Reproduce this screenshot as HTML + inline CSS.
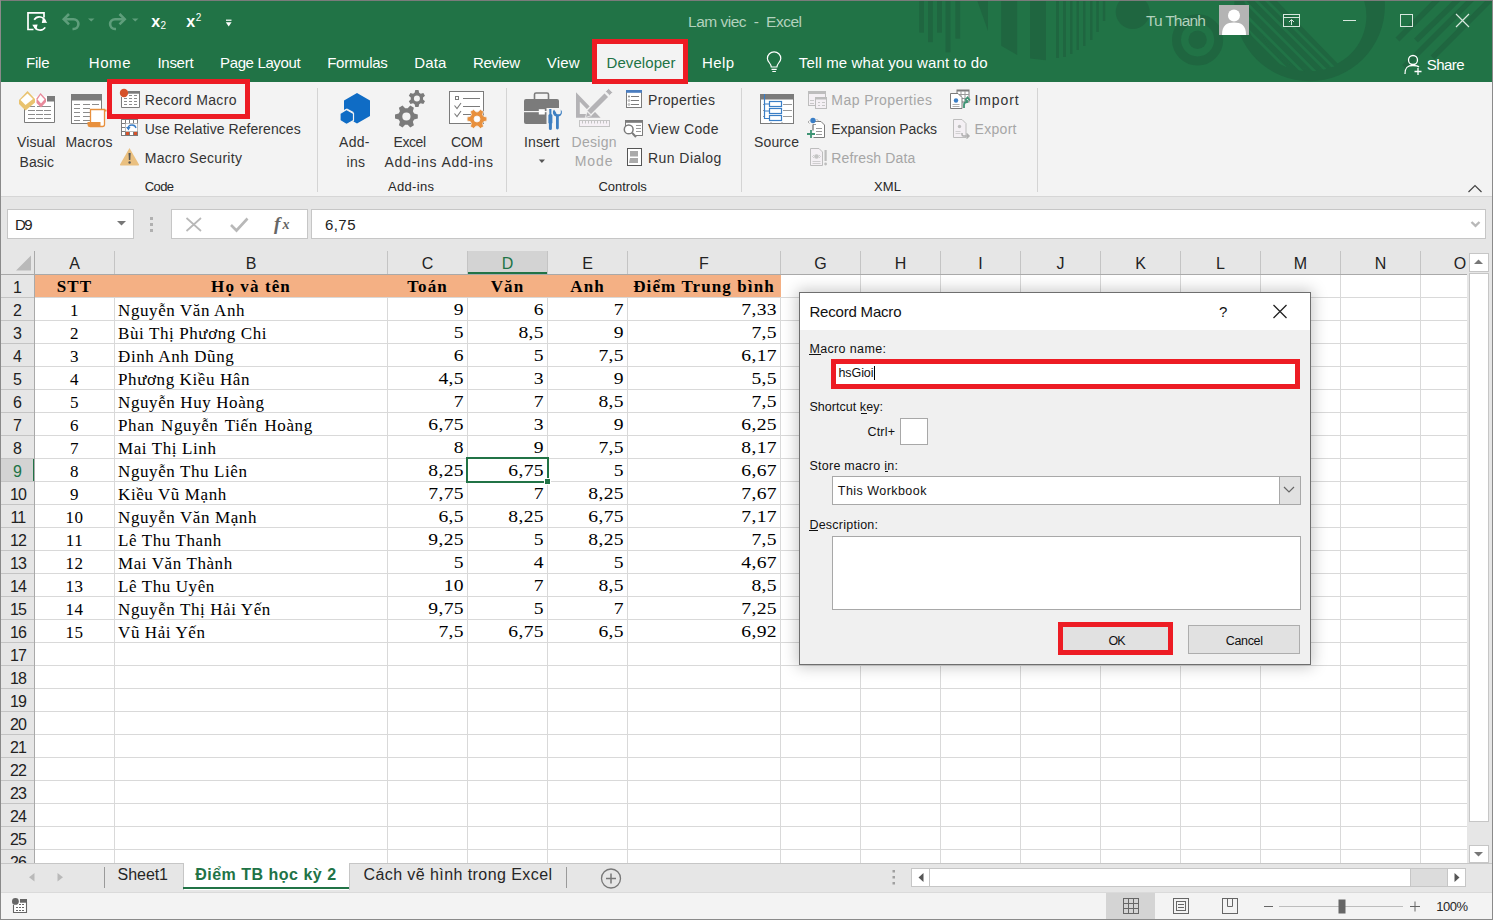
<!DOCTYPE html>
<html><head><meta charset="utf-8"><title>Excel - Record Macro</title>
<style>
html,body{margin:0;padding:0}
body{width:1493px;height:920px;overflow:hidden;position:relative;background:#fff;font-family:"Liberation Sans",sans-serif}
.a{position:absolute;box-sizing:content-box}
.t{position:absolute;white-space:pre;line-height:1}
</style></head><body>
<div class="a" style="left:0;top:0;width:1493px;height:82px;background:#217346"></div>
<svg class="a" style="left:0;top:0" width="1493" height="82" viewBox="0 0 1493 82">
<defs><clipPath id="ringin"><circle cx="1313" cy="16" r="53.4"/></clipPath><clipPath id="ringout"><circle cx="1309.6" cy="6" r="65.3"/></clipPath></defs>
<g fill="#1f6640">
<path d="M1030 0 H1046 V60.3 L1030 58.5Z"/>
<rect x="919.2" y="0" width="4.8" height="32.6"/><rect x="928" y="0" width="4.8" height="42.2"/><rect x="937" y="0" width="5" height="32.6"/><rect x="945.5" y="0" width="5" height="52.4"/><rect x="955.4" y="0" width="4.8" height="38.6"/>
<path d="M977 0 H988 V31Z"/><path d="M1001.2 0 H1017.2 V54.9 L1001.2 45.8Z"/>
<rect x="1056" y="0" width="3" height="58"/><rect x="1063" y="0" width="3" height="57"/><rect x="1070" y="0" width="2.5" height="54"/>
<rect x="1076.5" y="0" width="2.5" height="50"/><rect x="1083" y="0" width="2.5" height="46"/><rect x="1090" y="0" width="2.5" height="40"/><rect x="1096.3" y="0" width="2.5" height="32"/><rect x="1102.8" y="0" width="2.5" height="21"/>
<circle cx="1132.7" cy="12" r="17"/>
<circle cx="1197.6" cy="39.8" r="9.2"/>
</g>
<g fill="none" stroke="#1f6640">
<circle cx="1197.6" cy="39.8" r="21.1" stroke-width="9"/>
</g>
<g fill="#1f6640"><path fill-rule="evenodd" d="M1234.3 6 A75.3 75.3 0 1 0 1384.9 6 A75.3 75.3 0 1 0 1234.3 6Z M1259.6 16 A53.4 53.4 0 1 0 1366.4 16 A53.4 53.4 0 1 0 1259.6 16Z"/>
<g clip-path="url(#ringin)"><path d="M1200 0 H1276 L1340 66 L1340 90 H1200Z"/></g></g>
<g fill="none" stroke="#217346" stroke-width="2.8" clip-path="url(#ringout)">
<path d="M1266 0 L1356 90 M1255.6 0 L1345.6 90 M1243.4 0 L1333.4 90 M1230.5 0 L1320.5 90 M1217.7 0 L1307.7 90"/>
</g>
<g fill="none" stroke="#1f6640">
<path d="M1397.5 39.5 L1439 -2 M1416 40.5 L1459.5 -2 M1404 67 L1474 -3 M1432.6 57.5 L1494 -4" stroke-width="5.5"/>
</g>
</svg>
<div class="a" style="left:0;top:0;width:1493px;height:1px;background:#7b7b7b"></div>
<svg class="a" style="left:0;top:0" width="250" height="40" viewBox="0 0 250 40">
<path d="M33.5 29.5 H28 V12.8 H44 V17.5" fill="none" stroke="#fff" stroke-width="1.7"/>
<g fill="none" stroke="#fff" stroke-width="1.7">
<path d="M45.3 22 A6 6 0 0 0 34.2 19.8"/><path d="M34.3 25.3 A6 6 0 0 0 45.2 27.4"/>
</g>
<path d="M43 17.3 L47.3 22.8 L41.8 23Z M36.2 30.3 L32.2 24.7 L37.6 24.4Z" fill="#fff"/>
<g fill="none" stroke="#5e9e7b" stroke-width="2.6">
<path d="M64 19.2 H73.5 A4.9 4.9 0 0 1 73.5 29 H72.5"/>
<path d="M124.5 19.2 H115 A4.9 4.9 0 0 0 115 29 H116"/>
<path d="M69 14 L63.8 19.2 L69 24.4 M119.5 14 L124.7 19.2 L119.5 24.4"/>
</g>
<path d="M88 18.5 H94.5 L91.25 21.5Z M132 18.5 H138.5 L135.25 21.5Z" fill="#5e9e7b"/>
<text x="151.3" y="26.7" font-family="Liberation Sans" font-weight="bold" font-size="16" fill="#fff">x</text>
<text x="160.5" y="29" font-family="Liberation Sans" font-size="10" fill="#fff">2</text>
<text x="186.3" y="26.7" font-family="Liberation Sans" font-weight="bold" font-size="16" fill="#fff">x</text>
<text x="195.8" y="20.5" font-family="Liberation Sans" font-size="10" fill="#fff">2</text>
<path d="M226 20.2 H231.5" stroke="#fff" stroke-width="1.2"/><path d="M225.8 22.3 H231.6 L228.7 26.6Z" fill="#fff"/>
</svg>
<svg class="a" style="left:1219px;top:5px" width="30" height="30" viewBox="0 0 30 30"><rect width="30" height="30" fill="#b4b4b4"/>
<circle cx="15" cy="10.5" r="6" fill="#fff"/><path d="M3 30 C3 20 8 17.5 15 17.5 C22 17.5 27 20 27 30Z" fill="#fff"/></svg>
<svg class="a" style="left:1270px;top:0" width="223" height="82" viewBox="1270 0 223 82">
<g fill="none" stroke="#d8e7de" stroke-width="1">
<rect x="1283.5" y="14.5" width="16" height="12"/><path d="M1283.5 17.5 H1299.5"/><path d="M1291.5 25 V20 M1289 22 L1291.5 19.5 L1294 22"/>
<path d="M1343 20.5 H1356"/>
<rect x="1400.5" y="14.5" width="12" height="12"/>
<path d="M1456 14 L1469 27 M1469 14 L1456 27" stroke-width="1.2"/>
<circle cx="1413" cy="60" r="4.5" stroke="#fff" stroke-width="1.3"/><path d="M1405 74 C1405 67 1408 65.5 1413 65.5 C1416 65.5 1418 66 1419 67" stroke="#fff" stroke-width="1.3"/>
<path d="M1418 68 V75 M1414.5 71.5 H1421.5" stroke="#fff" stroke-width="1.3"/>
</g></svg>
<svg class="a" style="left:760px;top:48px" width="30" height="28" viewBox="760 48 30 28"><g fill="none" stroke="#fff" stroke-width="1.2">
<path d="M771.3 67 C771.3 63.5 767.4 62 767.4 58.5 A6.7 6.7 0 0 1 780.8 58.5 C780.8 62 776.9 63.5 776.9 67 Z"/><path d="M771.5 69.3 H776.7 M772.3 71.5 H775.9"/></g></svg>
<div class="a" style="left:597px;top:44px;width:86px;height:38px;background:#f3f3f3"></div>
<div class="a" style="left:1px;top:82px;width:1491px;height:114px;background:#f3f3f3"></div>
<div class="a" style="left:0;top:196px;width:1493px;height:1px;background:#d6d6d6"></div>
<div class="a" style="left:317px;top:88px;width:1px;height:104px;background:#d4d4d4"></div>
<div class="a" style="left:506px;top:88px;width:1px;height:104px;background:#d4d4d4"></div>
<div class="a" style="left:741px;top:88px;width:1px;height:104px;background:#d4d4d4"></div>
<div class="a" style="left:1037px;top:88px;width:1px;height:104px;background:#d4d4d4"></div>
<svg class="a" style="left:1466px;top:180px" width="18" height="14"><path d="M2.5 12 L9 5.5 L15.5 12" fill="none" stroke="#444" stroke-width="1.2"/></svg>
<div class="a" style="left:107px;top:79px;width:133px;height:30px;border:5px solid #ed1c24"></div>
<div class="a" style="left:592px;top:39px;width:86px;height:35px;border:5px solid #ed1c24"></div>
<svg class="a" style="left:0;top:82px" width="1040" height="114" viewBox="0 82 1040 114">
<!-- Visual Basic -->
<rect x="24.5" y="96.5" width="30" height="26" fill="#fff"/><path d="M24.5 108 V122.5 H54.5 V96.5" fill="none" stroke="#7b7b7b"/>
<rect x="47" y="96" width="8" height="5.5" fill="#7b7b7b"/>
<g stroke="#8c8c8c" stroke-width="1">
<path d="M28 106.5h7M37 106.5h7M44 106.5h7M28 110.5h7M36 110.5h7M44 110.5h7M28 114.5h7M36 114.5h7M44 114.5h7M28 118.5h7M36 118.5h7M44 118.5h7"/></g>
<path d="M27.5 91 L35 99 L35 102.5 L25.5 110.5 L19 104 L19 100 Z" fill="#e9c36f"/>
<path d="M27.5 93.5 L33 99 L25.5 105 L20.5 100 Z" fill="#fff"/>
<path d="M40.5 93 L46 99 L46 102 L41 107.5 L36.5 103 L36.5 98.5 Z" fill="#e8899b"/>
<path d="M40.5 95 L44.5 99.5 L41 103.5 L37.5 99.5 Z" fill="#fff"/>
<!-- Macros -->
<rect x="71.5" y="94.5" width="30" height="29" fill="#fff" stroke="#7b7b7b"/>
<rect x="71" y="94" width="31" height="6.5" fill="#7b7b7b"/>
<g stroke="#8c8c8c"><path d="M74 104.5h6M83 104.5h7M92 104.5h7M74 108.5h6M83 108.5h7M74 112.5h6M83 112.5h7M74 116.5h6M83 116.5h7M74 120.5h6M83 120.5h7"/></g>
<path d="M90.5 109.5 h14 v15 a2 2 0 0 1 -2 2 h-12 z" fill="#fff" stroke="#e8903d" stroke-width="1.3"/>
<path d="M87.5 122 h13 v5 h-11 a2 2.5 0 0 1 -2 -2.5z" fill="#e8903d"/>
<path d="M104.5 109.5 h2 v2 h-2z" fill="#e8903d"/>
<!-- Record Macro -->
<rect x="121.5" y="91.5" width="18" height="16" fill="#fff"/><path d="M121.5 97 V107.5 H139.5 V91.5" fill="none" stroke="#7b7b7b"/>
<rect x="128" y="91" width="12" height="2.7" fill="#7b7b7b"/>
<g stroke="#8c8c8c"><path d="M129 95.5h3M134 95.5h3M124 98.5h3M129 98.5h3M134 98.5h3M124 101.5h3M129 101.5h3M134 101.5h3M124 104.5h3M129 104.5h3M134 104.5h3"/></g>
<circle cx="124" cy="93" r="4.2" fill="#d5522b"/>
<!-- Use Relative References -->
<rect x="121.5" y="119.5" width="16" height="16" fill="#fff" stroke="#7b7b7b"/>
<path d="M125.5 119.5v16M129.5 119.5v16M133.5 119.5v16M121.5 123.5h16M121.5 127.5h16M121.5 131.5h16" stroke="#7b7b7b" stroke-width="1"/>
<rect x="125.5" y="123.5" width="12" height="8" fill="#fff"/>
<rect x="126" y="132" width="3" height="3" fill="#d5522b"/><rect x="134" y="132" width="3" height="3" fill="#d5522b"/>
<path d="M128 129 C128 126 130 125 132 125 C134 125 135.5 126 136 128" fill="none" stroke="#3a7ec6" stroke-width="1.3"/>
<path d="M126 127 L128.5 130.5 L130.5 127Z" fill="#3a7ec6"/>
<!-- Macro Security -->
<path d="M129.5 148 L139 164.5 Q139.5 165.5 138 165.5 L121 165.5 Q119.5 165.5 120 164.5 Z" fill="#eac080"/>
<path d="M128.5 153 h2.2 l-0.4 7 h-1.4z" fill="#555"/><circle cx="129.6" cy="162.5" r="1.2" fill="#555"/>
<!-- Add-ins -->
<path d="M357 93 L370 100.5 L370 116 L357 123.5 L353.5 121.5 L353.5 112 L347 108.5 L344 110 L344 100.5 Z" fill="#0f6cc5"/>
<path d="M346.5 109.5 L353.5 113.5 L353.5 120.5 L346.5 124.5 L340 120.5 L340 113.5 Z" fill="#0f6cc5" stroke="#f3f3f3" stroke-width="1.2"/>
<!-- Excel Add-ins gears -->
<path d="M414.14 113.50 L417.80 114.40 L417.80 118.60 L414.14 119.50 L412.87 121.70 L413.92 125.32 L410.28 127.42 L407.67 124.70 L405.13 124.70 L402.52 127.42 L398.88 125.32 L399.93 121.70 L398.66 119.50 L395.00 118.60 L395.00 114.40 L398.66 113.50 L399.93 111.30 L398.88 107.68 L402.52 105.58 L405.13 108.30 L407.67 108.30 L410.28 105.58 L413.92 107.68 L412.87 111.30Z M410.50 116.50 A4.1 4.1 0 1 0 402.30 116.50 A4.1 4.1 0 1 0 410.50 116.50Z" fill="#7b7b7b" fill-rule="evenodd" />
<path d="M414.60 92.74 L415.30 90.10 L418.50 90.10 L419.20 92.74 L420.74 93.63 L423.37 92.91 L424.97 95.69 L423.04 97.61 L423.04 99.39 L424.97 101.31 L423.37 104.09 L420.74 103.37 L419.20 104.26 L418.50 106.90 L415.30 106.90 L414.60 104.26 L413.06 103.37 L410.43 104.09 L408.83 101.31 L410.76 99.39 L410.76 97.61 L408.83 95.69 L410.43 92.91 L413.06 93.63Z M419.90 98.50 A3.0 3.0 0 1 0 413.90 98.50 A3.0 3.0 0 1 0 419.90 98.50Z" fill="#7b7b7b" fill-rule="evenodd" />
<!-- COM Add-ins -->
<rect x="449.5" y="91.5" width="34" height="32" fill="#fff" stroke="#7b7b7b"/>
<rect x="455.5" y="96.5" width="3" height="3" fill="none" stroke="#7b7b7b"/>
<path d="M463 98.5h17M463 106.5h17M463 114.5h8" stroke="#7b7b7b" stroke-width="1"/>
<path d="M454.5 105.5 l2.5 3 l4 -5.5 M454.5 113.5 l2.5 3 l4 -5.5" fill="none" stroke="#7b7b7b" stroke-width="1.1"/>
<path d="M483.67 116.30 L486.90 117.10 L486.90 120.90 L483.67 121.70 L482.68 123.43 L483.60 126.62 L480.30 128.52 L478.00 126.13 L476.00 126.13 L473.70 128.52 L470.40 126.62 L471.32 123.43 L470.33 121.70 L467.10 120.90 L467.10 117.10 L470.33 116.30 L471.32 114.57 L470.40 111.38 L473.70 109.48 L476.00 111.87 L478.00 111.87 L480.30 109.48 L483.60 111.38 L482.68 114.57Z M480.00 119.00 A3.0 3.0 0 1 0 474.00 119.00 A3.0 3.0 0 1 0 480.00 119.00Z" fill="#e8903d" fill-rule="evenodd" stroke="#f3f3f3" stroke-width="0.8"/>
<!-- Insert briefcase -->
<path d="M534.5 99 V94.5 a1.5 1.5 0 0 1 1.5 -1.5 h11 a1.5 1.5 0 0 1 1.5 1.5 V99" fill="none" stroke="#7b7b7b" stroke-width="1.6"/>
<rect x="524" y="99" width="35" height="25" rx="2" fill="#7b7b7b"/>
<rect x="524" y="111" width="35" height="1.2" fill="#f3f3f3"/>
<rect x="538.8" y="109.2" width="6" height="5.3" fill="#fff"/>
<rect x="546.5" y="108" width="16" height="22" fill="#f3f3f3"/>
<path d="M549.2 109 h2.2 v5 l1 1 v8 l-0.5 0.5 v5 a1.5 1.5 0 0 1 -3 0 v-5 l-0.5 -0.5 v-8 l1 -1z" fill="#3e7fc1"/>
<path d="M554 109.5 a4.2 4.2 0 0 0 2 7 v11.5 a1.4 1.4 0 0 0 2.8 0 v-11.5 a4.2 4.2 0 0 0 2 -7 v3 a1.7 1.7 0 0 1 -1.5 1.7 h-1.8 a1.7 1.7 0 0 1 -1.5 -1.7z" fill="#3e7fc1"/>
<path d="M538.8 159.4 h6.2 l-3.1 3.5z" fill="#555"/>
<!-- Design Mode -->
<path d="M576 92.2 L600.6 117.8 H576 Z M579.8 101.8 V114 H591.5 Z" fill="#b4b3b6" fill-rule="evenodd"/>
<path d="M586.5 110.5 L604.5 92.5 L609 97 L591 115 Z" fill="#b4b3b6" stroke="#f3f3f3" stroke-width="1.3"/>
<path d="M585.3 117.6 L587.2 111.6 L591.3 115.7 Z" fill="#b4b3b6" stroke="#f3f3f3" stroke-width="0.8"/>
<path d="M605.6 91.4 L608.6 88.4 L612.6 92.4 L609.6 95.4 Z" fill="#b4b3b6" stroke="#f3f3f3" stroke-width="0.8"/>
<rect x="579.5" y="120.5" width="30" height="6" fill="#f5f0f5" stroke="#c4c4c4"/>
<path d="M582.5 121v2.5M585.5 121v2.5M588.5 121v2.5M591.5 121v2.5M594.5 121v2.5M597.5 121v2.5M600.5 121v2.5M603.5 121v2.5M606.5 121v2.5" stroke="#c4c4c4"/>
<!-- Properties -->
<rect x="626.5" y="90.5" width="15" height="17" fill="#fff" stroke="#7b7b7b"/>
<rect x="626" y="90" width="16" height="2.8" fill="#4a7dc0"/>
<path d="M631 96.5h8M631 100.5h8M631 104.5h8" stroke="#7b7b7b"/>
<circle cx="629" cy="96.5" r="0.9" fill="#7b7b7b"/><circle cx="629" cy="100.5" r="0.9" fill="none" stroke="#7b7b7b" stroke-width="0.6"/><circle cx="629" cy="104.5" r="0.9" fill="none" stroke="#7b7b7b" stroke-width="0.6"/>
<!-- View Code -->
<path d="M625.5 126 V120.5 H642.5 V135.5 H636" fill="#fff" stroke="#7b7b7b"/>
<rect x="626" y="121" width="16" height="14" fill="#fff"/>
<path d="M625.5 126 V120.5 H642.5 V135.5 H636" fill="none" stroke="#7b7b7b"/>
<rect x="625" y="120" width="18" height="2.8" fill="#7b7b7b"/>
<path d="M636 125.5h5M636 128.5h5M636 131.5h5" stroke="#999"/>
<circle cx="628.7" cy="129.4" r="4.4" fill="#fff" stroke="#7b7b7b" stroke-width="1.5"/>
<path d="M632 132.8 L636 137" stroke="#7b7b7b" stroke-width="2"/>
<!-- Run Dialog -->
<rect x="627.5" y="148.5" width="14" height="17" fill="#fff" stroke="#555"/>
<rect x="630" y="151" width="8" height="5.5" fill="#aaa"/>
<path d="M630 158 h8 v5 h-9z" fill="#aaa"/>
<!-- Source -->
<rect x="760.5" y="94.5" width="33" height="29" fill="#fff" stroke="#7b7b7b"/>
<rect x="760" y="94" width="34" height="5.5" fill="#7b7b7b"/>
<path d="M763 104.5h2M763 110.5h2M763 116.5h2M783 104.5h9M783 110.5h9M783 116.5h9M771 122v1.5M782 122v1.5" stroke="#999"/>
<path d="M764.5 94 V118.5 H769 M764.5 104 H769 M764.5 111 H769" fill="none" stroke="#3a7ec6" stroke-width="1.2"/>
<rect x="769.5" y="101.5" width="12" height="5" fill="#fff" stroke="#3a7ec6" stroke-width="1.2"/>
<rect x="769.5" y="108.5" width="12" height="5" fill="#fff" stroke="#3a7ec6" stroke-width="1.2"/>
<rect x="769.5" y="115.5" width="12" height="5" fill="#fff" stroke="#3a7ec6" stroke-width="1.2"/>
<!-- Map Properties -->
<rect x="808.5" y="91.5" width="17" height="14" fill="#f4f0f4" stroke="#bdbdbd"/><rect x="808" y="91" width="18" height="3" fill="#bdbdbd"/>
<rect x="815.5" y="97.5" width="11" height="11" fill="#f4f0f4" stroke="#bdbdbd"/><rect x="815" y="97" width="12" height="2.5" fill="#bdbdbd"/>
<path d="M818 102.5h2M822 102.5h3M818 105.5h2M822 105.5h3M810 100.5h4M810 103.5h4" stroke="#c8c8c8"/>
<!-- Expansion Packs -->
<path d="M813.5 121.5 H821 L824.5 125 V137.5 H813.5" fill="#fff" stroke="#7b7b7b"/>
<path d="M816 128.5h6M816 131.5h6M816 134.5h6M813 124.5h3" stroke="#999"/>
<circle cx="813" cy="120.5" r="2.7" fill="#3a7ec6"/>
<path d="M809.5 120.5 l-1.5 1.5 l1.5 1.5 M816.5 119 l1.5 1.5 l-1.5 1.5" fill="none" stroke="#999" stroke-width="0.8"/>
<path d="M813 124.5v6" stroke="#555"/>
<path d="M807 134 h8 M811 130 v8" stroke="#3e9474" stroke-width="1.8"/>
<!-- Refresh Data -->
<path d="M810.5 148.5 H819 L822.5 152 V165.5 H810.5Z" fill="#f4f0f4" stroke="#bdbdbd"/>
<circle cx="816.5" cy="156.5" r="2.3" fill="#c4c4c4"/>
<path d="M812.5 156.5 l1.5 -1.5 M812.5 156.5 l1.5 1.5 M820.5 156.5 l-1.5 -1.5 M820.5 156.5 l-1.5 1.5 M812.5 161.5h8M812.5 163.5h8" stroke="#c4c4c4" stroke-width="0.8"/>
<rect x="824.5" y="150" width="2.2" height="11" fill="#bdbdbd"/><circle cx="825.6" cy="164" r="1.4" fill="#bdbdbd"/>
<!-- Import -->
<rect x="957" y="90" width="12" height="12" fill="#fff" stroke="#7b7b7b"/><rect x="957" y="90" width="12" height="1.5" fill="#7b7b7b"/>
<path d="M961 91v11M965 91v11M957 94.5h12M957 98.5h12" stroke="#999"/>
<path d="M950.5 93.5 H958 L962 97.5 V108.5 H950.5Z" fill="#fff" stroke="#7b7b7b"/>
<circle cx="956" cy="100.5" r="2.2" fill="#3a7ec6"/>
<path d="M952.5 104.5h7M952.5 106.5h7" stroke="#999" stroke-width="0.8"/>
<path d="M964 108 v-3 a3 3 0 0 1 3 -3 v-2 M965 100.5 l2.5 -3 l2.5 3" fill="none" stroke="#3e9474" stroke-width="1.8"/>
<!-- Export -->
<path d="M953.5 119.5 H962 L966 123.5 V137.5 H953.5Z" fill="#f4f0f4" stroke="#bdbdbd"/>
<circle cx="959.5" cy="126.5" r="1.7" fill="#bdbdbd"/>
<path d="M955.5 131.5h5M955.5 133.5h5" stroke="#c8c8c8" stroke-width="0.8"/>
<path d="M962 133 v1.5 a1.5 1.5 0 0 0 1.5 1.5 H969 M966.5 133.5 L969 136 L966.5 138.5" fill="none" stroke="#b0b0b0" stroke-width="1.5"/>
</svg>
<div class="a" style="left:1px;top:197px;width:1491px;height:54px;background:#e6e6e6"></div>
<div class="a" style="left:7px;top:209px;width:125px;height:28px;background:#fff;border:1px solid #c6c6c6"></div>
<svg class="a" style="left:115px;top:218px" width="14" height="10"><path d="M2 3 H11 L6.5 7.5Z" fill="#777"/></svg>
<svg class="a" style="left:148px;top:214px" width="8" height="20"><rect x="2" y="3" width="3" height="3" fill="#b0b0b0"/><rect x="2" y="9" width="3" height="3" fill="#b0b0b0"/><rect x="2" y="15" width="3" height="3" fill="#b0b0b0"/></svg>
<div class="a" style="left:171px;top:209px;width:135px;height:28px;background:#fff;border:1px solid #c6c6c6"></div>
<svg class="a" style="left:180px;top:210px" width="120" height="26" viewBox="180 210 120 26"><path d="M186.5 218 L201 231 M201 218 L186.5 231" stroke="#b8b8b8" stroke-width="1.7"/>
<path d="M231 225 L236.5 230.5 L247.5 218.5" fill="none" stroke="#b8b8b8" stroke-width="2.6"/>
<text x="274" y="230" font-family="Liberation Serif" font-style="italic" font-weight="bold" font-size="19" fill="#666">f</text><text x="282.5" y="229" font-family="Liberation Serif" font-style="italic" font-weight="bold" font-size="14" fill="#666">x</text></svg>
<div class="a" style="left:311px;top:209px;width:1173px;height:28px;background:#fff;border:1px solid #c6c6c6"></div>
<svg class="a" style="left:1466px;top:216px" width="16" height="14"><path d="M5.5 6 L9.5 9.8 L13.5 6" fill="none" stroke="#b8b8b8" stroke-width="2.4"/></svg>
<div class="a" style="left:1px;top:251px;width:1466px;height:23px;background:#e6e6e6"></div>
<div class="a" style="left:1px;top:274px;width:34px;height:589px;background:#e6e6e6"></div>
<div class="a" style="left:35px;top:275px;width:1432px;height:588px;background:#fff"></div>
<div class="a" style="left:468px;top:251px;width:79px;height:23px;background:#d3d3d3"></div>
<div class="a" style="left:468px;top:272px;width:79px;height:2px;background:#217346"></div>
<div class="a" style="left:1px;top:459px;width:33px;height:22px;background:#d3d3d3"></div>
<div class="a" style="left:33px;top:458px;width:2px;height:24px;background:#217346"></div>
<svg class="a" style="left:14px;top:254px" width="20" height="18"><path d="M17 1.5 V16.5 H2Z" fill="#b9b9b9"/></svg>
<div class="a" style="left:114px;top:275px;width:1px;height:588px;background:#d9d9d9"></div>
<div class="a" style="left:114px;top:251px;width:1px;height:23px;background:#c4c4c4"></div>
<div class="a" style="left:387px;top:275px;width:1px;height:588px;background:#d9d9d9"></div>
<div class="a" style="left:387px;top:251px;width:1px;height:23px;background:#c4c4c4"></div>
<div class="a" style="left:467px;top:275px;width:1px;height:588px;background:#d9d9d9"></div>
<div class="a" style="left:467px;top:251px;width:1px;height:23px;background:#c4c4c4"></div>
<div class="a" style="left:547px;top:275px;width:1px;height:588px;background:#d9d9d9"></div>
<div class="a" style="left:547px;top:251px;width:1px;height:23px;background:#c4c4c4"></div>
<div class="a" style="left:627px;top:275px;width:1px;height:588px;background:#d9d9d9"></div>
<div class="a" style="left:627px;top:251px;width:1px;height:23px;background:#c4c4c4"></div>
<div class="a" style="left:780px;top:275px;width:1px;height:588px;background:#d9d9d9"></div>
<div class="a" style="left:780px;top:251px;width:1px;height:23px;background:#c4c4c4"></div>
<div class="a" style="left:860px;top:275px;width:1px;height:588px;background:#d9d9d9"></div>
<div class="a" style="left:860px;top:251px;width:1px;height:23px;background:#c4c4c4"></div>
<div class="a" style="left:940px;top:275px;width:1px;height:588px;background:#d9d9d9"></div>
<div class="a" style="left:940px;top:251px;width:1px;height:23px;background:#c4c4c4"></div>
<div class="a" style="left:1020px;top:275px;width:1px;height:588px;background:#d9d9d9"></div>
<div class="a" style="left:1020px;top:251px;width:1px;height:23px;background:#c4c4c4"></div>
<div class="a" style="left:1100px;top:275px;width:1px;height:588px;background:#d9d9d9"></div>
<div class="a" style="left:1100px;top:251px;width:1px;height:23px;background:#c4c4c4"></div>
<div class="a" style="left:1180px;top:275px;width:1px;height:588px;background:#d9d9d9"></div>
<div class="a" style="left:1180px;top:251px;width:1px;height:23px;background:#c4c4c4"></div>
<div class="a" style="left:1260px;top:275px;width:1px;height:588px;background:#d9d9d9"></div>
<div class="a" style="left:1260px;top:251px;width:1px;height:23px;background:#c4c4c4"></div>
<div class="a" style="left:1340px;top:275px;width:1px;height:588px;background:#d9d9d9"></div>
<div class="a" style="left:1340px;top:251px;width:1px;height:23px;background:#c4c4c4"></div>
<div class="a" style="left:1420px;top:275px;width:1px;height:588px;background:#d9d9d9"></div>
<div class="a" style="left:1420px;top:251px;width:1px;height:23px;background:#c4c4c4"></div>
<div class="a" style="left:35px;top:297px;width:1432px;height:1px;background:#d9d9d9"></div>
<div class="a" style="left:1px;top:297px;width:33px;height:1px;background:#c4c4c4"></div>
<div class="a" style="left:35px;top:320px;width:1432px;height:1px;background:#d9d9d9"></div>
<div class="a" style="left:1px;top:320px;width:33px;height:1px;background:#c4c4c4"></div>
<div class="a" style="left:35px;top:343px;width:1432px;height:1px;background:#d9d9d9"></div>
<div class="a" style="left:1px;top:343px;width:33px;height:1px;background:#c4c4c4"></div>
<div class="a" style="left:35px;top:366px;width:1432px;height:1px;background:#d9d9d9"></div>
<div class="a" style="left:1px;top:366px;width:33px;height:1px;background:#c4c4c4"></div>
<div class="a" style="left:35px;top:389px;width:1432px;height:1px;background:#d9d9d9"></div>
<div class="a" style="left:1px;top:389px;width:33px;height:1px;background:#c4c4c4"></div>
<div class="a" style="left:35px;top:412px;width:1432px;height:1px;background:#d9d9d9"></div>
<div class="a" style="left:1px;top:412px;width:33px;height:1px;background:#c4c4c4"></div>
<div class="a" style="left:35px;top:435px;width:1432px;height:1px;background:#d9d9d9"></div>
<div class="a" style="left:1px;top:435px;width:33px;height:1px;background:#c4c4c4"></div>
<div class="a" style="left:35px;top:458px;width:1432px;height:1px;background:#d9d9d9"></div>
<div class="a" style="left:1px;top:458px;width:33px;height:1px;background:#c4c4c4"></div>
<div class="a" style="left:35px;top:481px;width:1432px;height:1px;background:#d9d9d9"></div>
<div class="a" style="left:1px;top:481px;width:33px;height:1px;background:#c4c4c4"></div>
<div class="a" style="left:35px;top:504px;width:1432px;height:1px;background:#d9d9d9"></div>
<div class="a" style="left:1px;top:504px;width:33px;height:1px;background:#c4c4c4"></div>
<div class="a" style="left:35px;top:527px;width:1432px;height:1px;background:#d9d9d9"></div>
<div class="a" style="left:1px;top:527px;width:33px;height:1px;background:#c4c4c4"></div>
<div class="a" style="left:35px;top:550px;width:1432px;height:1px;background:#d9d9d9"></div>
<div class="a" style="left:1px;top:550px;width:33px;height:1px;background:#c4c4c4"></div>
<div class="a" style="left:35px;top:573px;width:1432px;height:1px;background:#d9d9d9"></div>
<div class="a" style="left:1px;top:573px;width:33px;height:1px;background:#c4c4c4"></div>
<div class="a" style="left:35px;top:596px;width:1432px;height:1px;background:#d9d9d9"></div>
<div class="a" style="left:1px;top:596px;width:33px;height:1px;background:#c4c4c4"></div>
<div class="a" style="left:35px;top:619px;width:1432px;height:1px;background:#d9d9d9"></div>
<div class="a" style="left:1px;top:619px;width:33px;height:1px;background:#c4c4c4"></div>
<div class="a" style="left:35px;top:642px;width:1432px;height:1px;background:#d9d9d9"></div>
<div class="a" style="left:1px;top:642px;width:33px;height:1px;background:#c4c4c4"></div>
<div class="a" style="left:35px;top:665px;width:1432px;height:1px;background:#d9d9d9"></div>
<div class="a" style="left:1px;top:665px;width:33px;height:1px;background:#c4c4c4"></div>
<div class="a" style="left:35px;top:688px;width:1432px;height:1px;background:#d9d9d9"></div>
<div class="a" style="left:1px;top:688px;width:33px;height:1px;background:#c4c4c4"></div>
<div class="a" style="left:35px;top:711px;width:1432px;height:1px;background:#d9d9d9"></div>
<div class="a" style="left:1px;top:711px;width:33px;height:1px;background:#c4c4c4"></div>
<div class="a" style="left:35px;top:734px;width:1432px;height:1px;background:#d9d9d9"></div>
<div class="a" style="left:1px;top:734px;width:33px;height:1px;background:#c4c4c4"></div>
<div class="a" style="left:35px;top:757px;width:1432px;height:1px;background:#d9d9d9"></div>
<div class="a" style="left:1px;top:757px;width:33px;height:1px;background:#c4c4c4"></div>
<div class="a" style="left:35px;top:780px;width:1432px;height:1px;background:#d9d9d9"></div>
<div class="a" style="left:1px;top:780px;width:33px;height:1px;background:#c4c4c4"></div>
<div class="a" style="left:35px;top:803px;width:1432px;height:1px;background:#d9d9d9"></div>
<div class="a" style="left:1px;top:803px;width:33px;height:1px;background:#c4c4c4"></div>
<div class="a" style="left:35px;top:826px;width:1432px;height:1px;background:#d9d9d9"></div>
<div class="a" style="left:1px;top:826px;width:33px;height:1px;background:#c4c4c4"></div>
<div class="a" style="left:35px;top:849px;width:1432px;height:1px;background:#d9d9d9"></div>
<div class="a" style="left:1px;top:849px;width:33px;height:1px;background:#c4c4c4"></div>
<div class="a" style="left:1px;top:274px;width:1466px;height:1px;background:#a9a9a9"></div>
<div class="a" style="left:34px;top:251px;width:1px;height:612px;background:#a9a9a9"></div>
<div class="a" style="left:35px;top:275px;width:746px;height:22px;background:#f4b084"></div>
<div class="t" style="left:54.5px;top:256px;width:40px;text-align:center;font-family:'Liberation Sans';font-size:16px;color:#222">A</div>
<div class="t" style="left:231.0px;top:256px;width:40px;text-align:center;font-family:'Liberation Sans';font-size:16px;color:#222">B</div>
<div class="t" style="left:407.5px;top:256px;width:40px;text-align:center;font-family:'Liberation Sans';font-size:16px;color:#222">C</div>
<div class="t" style="left:487.5px;top:256px;width:40px;text-align:center;font-family:'Liberation Sans';font-size:16px;color:#217346">D</div>
<div class="t" style="left:567.5px;top:256px;width:40px;text-align:center;font-family:'Liberation Sans';font-size:16px;color:#222">E</div>
<div class="t" style="left:684.0px;top:256px;width:40px;text-align:center;font-family:'Liberation Sans';font-size:16px;color:#222">F</div>
<div class="t" style="left:800.5px;top:256px;width:40px;text-align:center;font-family:'Liberation Sans';font-size:16px;color:#222">G</div>
<div class="t" style="left:880.5px;top:256px;width:40px;text-align:center;font-family:'Liberation Sans';font-size:16px;color:#222">H</div>
<div class="t" style="left:960.5px;top:256px;width:40px;text-align:center;font-family:'Liberation Sans';font-size:16px;color:#222">I</div>
<div class="t" style="left:1040.5px;top:256px;width:40px;text-align:center;font-family:'Liberation Sans';font-size:16px;color:#222">J</div>
<div class="t" style="left:1120.5px;top:256px;width:40px;text-align:center;font-family:'Liberation Sans';font-size:16px;color:#222">K</div>
<div class="t" style="left:1200.5px;top:256px;width:40px;text-align:center;font-family:'Liberation Sans';font-size:16px;color:#222">L</div>
<div class="t" style="left:1280.5px;top:256px;width:40px;text-align:center;font-family:'Liberation Sans';font-size:16px;color:#222">M</div>
<div class="t" style="left:1360.5px;top:256px;width:40px;text-align:center;font-family:'Liberation Sans';font-size:16px;color:#222">N</div>
<div class="t" style="left:1440px;top:256px;width:40px;text-align:center;font-family:'Liberation Sans';font-size:16px;color:#222">O</div>
<div class="t" style="left:1px;top:280px;width:33px;text-align:center;font-family:'Liberation Sans';font-size:16px;color:#222;letter-spacing:0px;text-indent:0px">1</div>
<div class="t" style="left:1px;top:303px;width:33px;text-align:center;font-family:'Liberation Sans';font-size:16px;color:#222;letter-spacing:0px;text-indent:0px">2</div>
<div class="t" style="left:1px;top:326px;width:33px;text-align:center;font-family:'Liberation Sans';font-size:16px;color:#222;letter-spacing:0px;text-indent:0px">3</div>
<div class="t" style="left:1px;top:349px;width:33px;text-align:center;font-family:'Liberation Sans';font-size:16px;color:#222;letter-spacing:0px;text-indent:0px">4</div>
<div class="t" style="left:1px;top:372px;width:33px;text-align:center;font-family:'Liberation Sans';font-size:16px;color:#222;letter-spacing:0px;text-indent:0px">5</div>
<div class="t" style="left:1px;top:395px;width:33px;text-align:center;font-family:'Liberation Sans';font-size:16px;color:#222;letter-spacing:0px;text-indent:0px">6</div>
<div class="t" style="left:1px;top:418px;width:33px;text-align:center;font-family:'Liberation Sans';font-size:16px;color:#222;letter-spacing:0px;text-indent:0px">7</div>
<div class="t" style="left:1px;top:441px;width:33px;text-align:center;font-family:'Liberation Sans';font-size:16px;color:#222;letter-spacing:0px;text-indent:0px">8</div>
<div class="t" style="left:1px;top:464px;width:33px;text-align:center;font-family:'Liberation Sans';font-size:16px;color:#217346;letter-spacing:0px;text-indent:0px">9</div>
<div class="t" style="left:1px;top:487px;width:33px;text-align:center;font-family:'Liberation Sans';font-size:16px;color:#222;letter-spacing:-0.9px;text-indent:0.9px">10</div>
<div class="t" style="left:1px;top:510px;width:33px;text-align:center;font-family:'Liberation Sans';font-size:16px;color:#222;letter-spacing:-0.9px;text-indent:0.9px">11</div>
<div class="t" style="left:1px;top:533px;width:33px;text-align:center;font-family:'Liberation Sans';font-size:16px;color:#222;letter-spacing:-0.9px;text-indent:0.9px">12</div>
<div class="t" style="left:1px;top:556px;width:33px;text-align:center;font-family:'Liberation Sans';font-size:16px;color:#222;letter-spacing:-0.9px;text-indent:0.9px">13</div>
<div class="t" style="left:1px;top:579px;width:33px;text-align:center;font-family:'Liberation Sans';font-size:16px;color:#222;letter-spacing:-0.9px;text-indent:0.9px">14</div>
<div class="t" style="left:1px;top:602px;width:33px;text-align:center;font-family:'Liberation Sans';font-size:16px;color:#222;letter-spacing:-0.9px;text-indent:0.9px">15</div>
<div class="t" style="left:1px;top:625px;width:33px;text-align:center;font-family:'Liberation Sans';font-size:16px;color:#222;letter-spacing:-0.9px;text-indent:0.9px">16</div>
<div class="t" style="left:1px;top:648px;width:33px;text-align:center;font-family:'Liberation Sans';font-size:16px;color:#222;letter-spacing:-0.9px;text-indent:0.9px">17</div>
<div class="t" style="left:1px;top:671px;width:33px;text-align:center;font-family:'Liberation Sans';font-size:16px;color:#222;letter-spacing:-0.9px;text-indent:0.9px">18</div>
<div class="t" style="left:1px;top:694px;width:33px;text-align:center;font-family:'Liberation Sans';font-size:16px;color:#222;letter-spacing:-0.9px;text-indent:0.9px">19</div>
<div class="t" style="left:1px;top:717px;width:33px;text-align:center;font-family:'Liberation Sans';font-size:16px;color:#222;letter-spacing:-0.9px;text-indent:0.9px">20</div>
<div class="t" style="left:1px;top:740px;width:33px;text-align:center;font-family:'Liberation Sans';font-size:16px;color:#222;letter-spacing:-0.9px;text-indent:0.9px">21</div>
<div class="t" style="left:1px;top:763px;width:33px;text-align:center;font-family:'Liberation Sans';font-size:16px;color:#222;letter-spacing:-0.9px;text-indent:0.9px">22</div>
<div class="t" style="left:1px;top:786px;width:33px;text-align:center;font-family:'Liberation Sans';font-size:16px;color:#222;letter-spacing:-0.9px;text-indent:0.9px">23</div>
<div class="t" style="left:1px;top:809px;width:33px;text-align:center;font-family:'Liberation Sans';font-size:16px;color:#222;letter-spacing:-0.9px;text-indent:0.9px">24</div>
<div class="t" style="left:1px;top:832px;width:33px;text-align:center;font-family:'Liberation Sans';font-size:16px;color:#222;letter-spacing:-0.9px;text-indent:0.9px">25</div>
<div class="t" style="left:1px;top:855px;width:33px;text-align:center;font-family:'Liberation Sans';font-size:16px;color:#222;letter-spacing:-0.9px;text-indent:0.9px">26</div>
<div class="t" style="left:35px;top:277.6px;width:79px;text-align:center;font-family:'Liberation Serif';font-size:17px;font-weight:700;letter-spacing:1.1px">STT</div>
<div class="t" style="left:115px;top:277.6px;width:272px;text-align:center;font-family:'Liberation Serif';font-size:17px;font-weight:700;letter-spacing:1.1px">Họ và tên</div>
<div class="t" style="left:388px;top:277.6px;width:79px;text-align:center;font-family:'Liberation Serif';font-size:17px;font-weight:700;letter-spacing:1.1px">Toán</div>
<div class="t" style="left:468px;top:277.6px;width:79px;text-align:center;font-family:'Liberation Serif';font-size:17px;font-weight:700;letter-spacing:1.1px">Văn</div>
<div class="t" style="left:548px;top:277.6px;width:79px;text-align:center;font-family:'Liberation Serif';font-size:17px;font-weight:700;letter-spacing:1.1px">Anh</div>
<div class="t" style="left:628px;top:277.6px;width:152px;text-align:center;font-family:'Liberation Serif';font-size:17px;font-weight:700;letter-spacing:1.1px">Điểm Trung bình</div>
<div class="t" style="left:35px;top:301.6px;width:79px;text-align:center;font-family:'Liberation Serif';font-size:17px;letter-spacing:0.6px">1</div>
<div class="t" style="left:118px;top:301.6px;width:269px;text-align:left;font-family:'Liberation Serif';font-size:17px;letter-spacing:0.6px">Nguyễn Văn Anh</div>
<div class="t" style="left:378px;top:301.3px;width:86px;text-align:right;font-family:'Liberation Serif';font-size:17.5px;letter-spacing:0.3px;transform:scaleX(1.12);transform-origin:right center">9</div>
<div class="t" style="left:458px;top:301.3px;width:86px;text-align:right;font-family:'Liberation Serif';font-size:17.5px;letter-spacing:0.3px;transform:scaleX(1.12);transform-origin:right center">6</div>
<div class="t" style="left:538px;top:301.3px;width:86px;text-align:right;font-family:'Liberation Serif';font-size:17.5px;letter-spacing:0.3px;transform:scaleX(1.12);transform-origin:right center">7</div>
<div class="t" style="left:618px;top:301.3px;width:159px;text-align:right;font-family:'Liberation Serif';font-size:17.5px;letter-spacing:0.3px;transform:scaleX(1.12);transform-origin:right center">7,33</div>
<div class="t" style="left:35px;top:324.6px;width:79px;text-align:center;font-family:'Liberation Serif';font-size:17px;letter-spacing:0.6px">2</div>
<div class="t" style="left:118px;top:324.6px;width:269px;text-align:left;font-family:'Liberation Serif';font-size:17px;letter-spacing:0.6px">Bùi Thị Phương Chi</div>
<div class="t" style="left:378px;top:324.3px;width:86px;text-align:right;font-family:'Liberation Serif';font-size:17.5px;letter-spacing:0.3px;transform:scaleX(1.12);transform-origin:right center">5</div>
<div class="t" style="left:458px;top:324.3px;width:86px;text-align:right;font-family:'Liberation Serif';font-size:17.5px;letter-spacing:0.3px;transform:scaleX(1.12);transform-origin:right center">8,5</div>
<div class="t" style="left:538px;top:324.3px;width:86px;text-align:right;font-family:'Liberation Serif';font-size:17.5px;letter-spacing:0.3px;transform:scaleX(1.12);transform-origin:right center">9</div>
<div class="t" style="left:618px;top:324.3px;width:159px;text-align:right;font-family:'Liberation Serif';font-size:17.5px;letter-spacing:0.3px;transform:scaleX(1.12);transform-origin:right center">7,5</div>
<div class="t" style="left:35px;top:347.6px;width:79px;text-align:center;font-family:'Liberation Serif';font-size:17px;letter-spacing:0.6px">3</div>
<div class="t" style="left:118px;top:347.6px;width:269px;text-align:left;font-family:'Liberation Serif';font-size:17px;letter-spacing:0.6px">Đinh Anh Dũng</div>
<div class="t" style="left:378px;top:347.3px;width:86px;text-align:right;font-family:'Liberation Serif';font-size:17.5px;letter-spacing:0.3px;transform:scaleX(1.12);transform-origin:right center">6</div>
<div class="t" style="left:458px;top:347.3px;width:86px;text-align:right;font-family:'Liberation Serif';font-size:17.5px;letter-spacing:0.3px;transform:scaleX(1.12);transform-origin:right center">5</div>
<div class="t" style="left:538px;top:347.3px;width:86px;text-align:right;font-family:'Liberation Serif';font-size:17.5px;letter-spacing:0.3px;transform:scaleX(1.12);transform-origin:right center">7,5</div>
<div class="t" style="left:618px;top:347.3px;width:159px;text-align:right;font-family:'Liberation Serif';font-size:17.5px;letter-spacing:0.3px;transform:scaleX(1.12);transform-origin:right center">6,17</div>
<div class="t" style="left:35px;top:370.6px;width:79px;text-align:center;font-family:'Liberation Serif';font-size:17px;letter-spacing:0.6px">4</div>
<div class="t" style="left:118px;top:370.6px;width:269px;text-align:left;font-family:'Liberation Serif';font-size:17px;letter-spacing:0.6px">Phương Kiều Hân</div>
<div class="t" style="left:378px;top:370.3px;width:86px;text-align:right;font-family:'Liberation Serif';font-size:17.5px;letter-spacing:0.3px;transform:scaleX(1.12);transform-origin:right center">4,5</div>
<div class="t" style="left:458px;top:370.3px;width:86px;text-align:right;font-family:'Liberation Serif';font-size:17.5px;letter-spacing:0.3px;transform:scaleX(1.12);transform-origin:right center">3</div>
<div class="t" style="left:538px;top:370.3px;width:86px;text-align:right;font-family:'Liberation Serif';font-size:17.5px;letter-spacing:0.3px;transform:scaleX(1.12);transform-origin:right center">9</div>
<div class="t" style="left:618px;top:370.3px;width:159px;text-align:right;font-family:'Liberation Serif';font-size:17.5px;letter-spacing:0.3px;transform:scaleX(1.12);transform-origin:right center">5,5</div>
<div class="t" style="left:35px;top:393.6px;width:79px;text-align:center;font-family:'Liberation Serif';font-size:17px;letter-spacing:0.6px">5</div>
<div class="t" style="left:118px;top:393.6px;width:269px;text-align:left;font-family:'Liberation Serif';font-size:17px;letter-spacing:0.6px">Nguyễn Huy Hoàng</div>
<div class="t" style="left:378px;top:393.3px;width:86px;text-align:right;font-family:'Liberation Serif';font-size:17.5px;letter-spacing:0.3px;transform:scaleX(1.12);transform-origin:right center">7</div>
<div class="t" style="left:458px;top:393.3px;width:86px;text-align:right;font-family:'Liberation Serif';font-size:17.5px;letter-spacing:0.3px;transform:scaleX(1.12);transform-origin:right center">7</div>
<div class="t" style="left:538px;top:393.3px;width:86px;text-align:right;font-family:'Liberation Serif';font-size:17.5px;letter-spacing:0.3px;transform:scaleX(1.12);transform-origin:right center">8,5</div>
<div class="t" style="left:618px;top:393.3px;width:159px;text-align:right;font-family:'Liberation Serif';font-size:17.5px;letter-spacing:0.3px;transform:scaleX(1.12);transform-origin:right center">7,5</div>
<div class="t" style="left:35px;top:416.6px;width:79px;text-align:center;font-family:'Liberation Serif';font-size:17px;letter-spacing:0.6px">6</div>
<div class="t" style="left:118px;top:416.6px;width:269px;text-align:left;font-family:'Liberation Serif';font-size:17px;letter-spacing:0.6px"><span style="word-spacing:1.8px">Phan Nguyễn Tiến Hoàng</span></div>
<div class="t" style="left:378px;top:416.3px;width:86px;text-align:right;font-family:'Liberation Serif';font-size:17.5px;letter-spacing:0.3px;transform:scaleX(1.12);transform-origin:right center">6,75</div>
<div class="t" style="left:458px;top:416.3px;width:86px;text-align:right;font-family:'Liberation Serif';font-size:17.5px;letter-spacing:0.3px;transform:scaleX(1.12);transform-origin:right center">3</div>
<div class="t" style="left:538px;top:416.3px;width:86px;text-align:right;font-family:'Liberation Serif';font-size:17.5px;letter-spacing:0.3px;transform:scaleX(1.12);transform-origin:right center">9</div>
<div class="t" style="left:618px;top:416.3px;width:159px;text-align:right;font-family:'Liberation Serif';font-size:17.5px;letter-spacing:0.3px;transform:scaleX(1.12);transform-origin:right center">6,25</div>
<div class="t" style="left:35px;top:439.6px;width:79px;text-align:center;font-family:'Liberation Serif';font-size:17px;letter-spacing:0.6px">7</div>
<div class="t" style="left:118px;top:439.6px;width:269px;text-align:left;font-family:'Liberation Serif';font-size:17px;letter-spacing:0.6px">Mai Thị Linh</div>
<div class="t" style="left:378px;top:439.3px;width:86px;text-align:right;font-family:'Liberation Serif';font-size:17.5px;letter-spacing:0.3px;transform:scaleX(1.12);transform-origin:right center">8</div>
<div class="t" style="left:458px;top:439.3px;width:86px;text-align:right;font-family:'Liberation Serif';font-size:17.5px;letter-spacing:0.3px;transform:scaleX(1.12);transform-origin:right center">9</div>
<div class="t" style="left:538px;top:439.3px;width:86px;text-align:right;font-family:'Liberation Serif';font-size:17.5px;letter-spacing:0.3px;transform:scaleX(1.12);transform-origin:right center">7,5</div>
<div class="t" style="left:618px;top:439.3px;width:159px;text-align:right;font-family:'Liberation Serif';font-size:17.5px;letter-spacing:0.3px;transform:scaleX(1.12);transform-origin:right center">8,17</div>
<div class="t" style="left:35px;top:462.6px;width:79px;text-align:center;font-family:'Liberation Serif';font-size:17px;letter-spacing:0.6px">8</div>
<div class="t" style="left:118px;top:462.6px;width:269px;text-align:left;font-family:'Liberation Serif';font-size:17px;letter-spacing:0.6px">Nguyễn Thu Liên</div>
<div class="t" style="left:378px;top:462.3px;width:86px;text-align:right;font-family:'Liberation Serif';font-size:17.5px;letter-spacing:0.3px;transform:scaleX(1.12);transform-origin:right center">8,25</div>
<div class="t" style="left:458px;top:462.3px;width:86px;text-align:right;font-family:'Liberation Serif';font-size:17.5px;letter-spacing:0.3px;transform:scaleX(1.12);transform-origin:right center">6,75</div>
<div class="t" style="left:538px;top:462.3px;width:86px;text-align:right;font-family:'Liberation Serif';font-size:17.5px;letter-spacing:0.3px;transform:scaleX(1.12);transform-origin:right center">5</div>
<div class="t" style="left:618px;top:462.3px;width:159px;text-align:right;font-family:'Liberation Serif';font-size:17.5px;letter-spacing:0.3px;transform:scaleX(1.12);transform-origin:right center">6,67</div>
<div class="t" style="left:35px;top:485.6px;width:79px;text-align:center;font-family:'Liberation Serif';font-size:17px;letter-spacing:0.6px">9</div>
<div class="t" style="left:118px;top:485.6px;width:269px;text-align:left;font-family:'Liberation Serif';font-size:17px;letter-spacing:0.6px">Kiều Vũ Mạnh</div>
<div class="t" style="left:378px;top:485.3px;width:86px;text-align:right;font-family:'Liberation Serif';font-size:17.5px;letter-spacing:0.3px;transform:scaleX(1.12);transform-origin:right center">7,75</div>
<div class="t" style="left:458px;top:485.3px;width:86px;text-align:right;font-family:'Liberation Serif';font-size:17.5px;letter-spacing:0.3px;transform:scaleX(1.12);transform-origin:right center">7</div>
<div class="t" style="left:538px;top:485.3px;width:86px;text-align:right;font-family:'Liberation Serif';font-size:17.5px;letter-spacing:0.3px;transform:scaleX(1.12);transform-origin:right center">8,25</div>
<div class="t" style="left:618px;top:485.3px;width:159px;text-align:right;font-family:'Liberation Serif';font-size:17.5px;letter-spacing:0.3px;transform:scaleX(1.12);transform-origin:right center">7,67</div>
<div class="t" style="left:35px;top:508.6px;width:79px;text-align:center;font-family:'Liberation Serif';font-size:17px;letter-spacing:0.6px">10</div>
<div class="t" style="left:118px;top:508.6px;width:269px;text-align:left;font-family:'Liberation Serif';font-size:17px;letter-spacing:0.6px">Nguyễn Văn Mạnh</div>
<div class="t" style="left:378px;top:508.3px;width:86px;text-align:right;font-family:'Liberation Serif';font-size:17.5px;letter-spacing:0.3px;transform:scaleX(1.12);transform-origin:right center">6,5</div>
<div class="t" style="left:458px;top:508.3px;width:86px;text-align:right;font-family:'Liberation Serif';font-size:17.5px;letter-spacing:0.3px;transform:scaleX(1.12);transform-origin:right center">8,25</div>
<div class="t" style="left:538px;top:508.3px;width:86px;text-align:right;font-family:'Liberation Serif';font-size:17.5px;letter-spacing:0.3px;transform:scaleX(1.12);transform-origin:right center">6,75</div>
<div class="t" style="left:618px;top:508.3px;width:159px;text-align:right;font-family:'Liberation Serif';font-size:17.5px;letter-spacing:0.3px;transform:scaleX(1.12);transform-origin:right center">7,17</div>
<div class="t" style="left:35px;top:531.6px;width:79px;text-align:center;font-family:'Liberation Serif';font-size:17px;letter-spacing:0.6px">11</div>
<div class="t" style="left:118px;top:531.6px;width:269px;text-align:left;font-family:'Liberation Serif';font-size:17px;letter-spacing:0.6px">Lê Thu Thanh</div>
<div class="t" style="left:378px;top:531.3px;width:86px;text-align:right;font-family:'Liberation Serif';font-size:17.5px;letter-spacing:0.3px;transform:scaleX(1.12);transform-origin:right center">9,25</div>
<div class="t" style="left:458px;top:531.3px;width:86px;text-align:right;font-family:'Liberation Serif';font-size:17.5px;letter-spacing:0.3px;transform:scaleX(1.12);transform-origin:right center">5</div>
<div class="t" style="left:538px;top:531.3px;width:86px;text-align:right;font-family:'Liberation Serif';font-size:17.5px;letter-spacing:0.3px;transform:scaleX(1.12);transform-origin:right center">8,25</div>
<div class="t" style="left:618px;top:531.3px;width:159px;text-align:right;font-family:'Liberation Serif';font-size:17.5px;letter-spacing:0.3px;transform:scaleX(1.12);transform-origin:right center">7,5</div>
<div class="t" style="left:35px;top:554.6px;width:79px;text-align:center;font-family:'Liberation Serif';font-size:17px;letter-spacing:0.6px">12</div>
<div class="t" style="left:118px;top:554.6px;width:269px;text-align:left;font-family:'Liberation Serif';font-size:17px;letter-spacing:0.6px">Mai Văn Thành</div>
<div class="t" style="left:378px;top:554.3px;width:86px;text-align:right;font-family:'Liberation Serif';font-size:17.5px;letter-spacing:0.3px;transform:scaleX(1.12);transform-origin:right center">5</div>
<div class="t" style="left:458px;top:554.3px;width:86px;text-align:right;font-family:'Liberation Serif';font-size:17.5px;letter-spacing:0.3px;transform:scaleX(1.12);transform-origin:right center">4</div>
<div class="t" style="left:538px;top:554.3px;width:86px;text-align:right;font-family:'Liberation Serif';font-size:17.5px;letter-spacing:0.3px;transform:scaleX(1.12);transform-origin:right center">5</div>
<div class="t" style="left:618px;top:554.3px;width:159px;text-align:right;font-family:'Liberation Serif';font-size:17.5px;letter-spacing:0.3px;transform:scaleX(1.12);transform-origin:right center">4,67</div>
<div class="t" style="left:35px;top:577.6px;width:79px;text-align:center;font-family:'Liberation Serif';font-size:17px;letter-spacing:0.6px">13</div>
<div class="t" style="left:118px;top:577.6px;width:269px;text-align:left;font-family:'Liberation Serif';font-size:17px;letter-spacing:0.6px">Lê Thu Uyên</div>
<div class="t" style="left:378px;top:577.3px;width:86px;text-align:right;font-family:'Liberation Serif';font-size:17.5px;letter-spacing:0.3px;transform:scaleX(1.12);transform-origin:right center">10</div>
<div class="t" style="left:458px;top:577.3px;width:86px;text-align:right;font-family:'Liberation Serif';font-size:17.5px;letter-spacing:0.3px;transform:scaleX(1.12);transform-origin:right center">7</div>
<div class="t" style="left:538px;top:577.3px;width:86px;text-align:right;font-family:'Liberation Serif';font-size:17.5px;letter-spacing:0.3px;transform:scaleX(1.12);transform-origin:right center">8,5</div>
<div class="t" style="left:618px;top:577.3px;width:159px;text-align:right;font-family:'Liberation Serif';font-size:17.5px;letter-spacing:0.3px;transform:scaleX(1.12);transform-origin:right center">8,5</div>
<div class="t" style="left:35px;top:600.6px;width:79px;text-align:center;font-family:'Liberation Serif';font-size:17px;letter-spacing:0.6px">14</div>
<div class="t" style="left:118px;top:600.6px;width:269px;text-align:left;font-family:'Liberation Serif';font-size:17px;letter-spacing:0.6px">Nguyễn Thị Hải Yến</div>
<div class="t" style="left:378px;top:600.3px;width:86px;text-align:right;font-family:'Liberation Serif';font-size:17.5px;letter-spacing:0.3px;transform:scaleX(1.12);transform-origin:right center">9,75</div>
<div class="t" style="left:458px;top:600.3px;width:86px;text-align:right;font-family:'Liberation Serif';font-size:17.5px;letter-spacing:0.3px;transform:scaleX(1.12);transform-origin:right center">5</div>
<div class="t" style="left:538px;top:600.3px;width:86px;text-align:right;font-family:'Liberation Serif';font-size:17.5px;letter-spacing:0.3px;transform:scaleX(1.12);transform-origin:right center">7</div>
<div class="t" style="left:618px;top:600.3px;width:159px;text-align:right;font-family:'Liberation Serif';font-size:17.5px;letter-spacing:0.3px;transform:scaleX(1.12);transform-origin:right center">7,25</div>
<div class="t" style="left:35px;top:623.6px;width:79px;text-align:center;font-family:'Liberation Serif';font-size:17px;letter-spacing:0.6px">15</div>
<div class="t" style="left:118px;top:623.6px;width:269px;text-align:left;font-family:'Liberation Serif';font-size:17px;letter-spacing:0.6px">Vũ Hải Yến</div>
<div class="t" style="left:378px;top:623.3px;width:86px;text-align:right;font-family:'Liberation Serif';font-size:17.5px;letter-spacing:0.3px;transform:scaleX(1.12);transform-origin:right center">7,5</div>
<div class="t" style="left:458px;top:623.3px;width:86px;text-align:right;font-family:'Liberation Serif';font-size:17.5px;letter-spacing:0.3px;transform:scaleX(1.12);transform-origin:right center">6,75</div>
<div class="t" style="left:538px;top:623.3px;width:86px;text-align:right;font-family:'Liberation Serif';font-size:17.5px;letter-spacing:0.3px;transform:scaleX(1.12);transform-origin:right center">6,5</div>
<div class="t" style="left:618px;top:623.3px;width:159px;text-align:right;font-family:'Liberation Serif';font-size:17.5px;letter-spacing:0.3px;transform:scaleX(1.12);transform-origin:right center">6,92</div>
<div class="a" style="left:466px;top:457px;width:79px;height:22px;border:2px solid #217346"></div>
<div class="a" style="left:544px;top:478px;width:5px;height:5px;background:#217346;border:1px solid #fff"></div>
<div class="a" style="left:1467px;top:251px;width:25px;height:612px;background:#e6e6e6"></div>
<div class="a" style="left:1469px;top:253px;width:18px;height:17px;background:#fff;border:1px solid #c6c6c6"></div>
<svg class="a" style="left:1472px;top:256px" width="14" height="12"><path d="M2 8 H11 L6.5 3.5Z" fill="#777"/></svg>
<div class="a" style="left:1469px;top:273px;width:18px;height:547px;background:#fff;border:1px solid #c6c6c6"></div>
<div class="a" style="left:1469px;top:845px;width:18px;height:16px;background:#fff;border:1px solid #c6c6c6"></div>
<svg class="a" style="left:1472px;top:848px" width="14" height="12"><path d="M2 4 H11 L6.5 8.5Z" fill="#777"/></svg>
<div class="a" style="left:1px;top:863px;width:1491px;height:29px;background:#e6e6e6;border-top:1px solid #c6c6c6"></div>
<svg class="a" style="left:20px;top:866px" width="60" height="22"><path d="M14.5 7 V15.5 L9 11.25Z" fill="#b9b9b9"/><path d="M37.5 7 V15.5 L43 11.25Z" fill="#b9b9b9"/></svg>
<div class="a" style="left:104px;top:867px;width:1px;height:21px;background:#9a9a9a"></div>
<div class="a" style="left:183px;top:863px;width:165px;height:27px;background:#fff;border-right:1px solid #c6c6c6;border-left:1px solid #c6c6c6"></div>
<div class="a" style="left:183px;top:887px;width:166px;height:2px;background:#217346"></div>
<div class="a" style="left:566px;top:867px;width:1px;height:21px;background:#9a9a9a"></div>
<svg class="a" style="left:598px;top:866px" width="26" height="26"><circle cx="13" cy="12.5" r="9.5" fill="none" stroke="#777" stroke-width="1.3"/><path d="M13 7.5 V17.5 M8 12.5 H18" stroke="#777" stroke-width="1.5"/></svg>
<svg class="a" style="left:890px;top:868px" width="8" height="20"><rect x="2.5" y="2" width="2.5" height="2.5" fill="#a0a0a0"/><rect x="2.5" y="8" width="2.5" height="2.5" fill="#a0a0a0"/><rect x="2.5" y="14" width="2.5" height="2.5" fill="#a0a0a0"/></svg>
<div class="a" style="left:911px;top:868px;width:555px;height:19px;background:#dcdcdc;border:1px solid #c6c6c6;box-sizing:border-box"></div>
<div class="a" style="left:911px;top:868px;width:19px;height:19px;background:#fff;border:1px solid #c6c6c6;box-sizing:border-box"></div>
<div class="a" style="left:929px;top:868px;width:482px;height:19px;background:#fff;border:1px solid #c6c6c6;box-sizing:border-box"></div>
<div class="a" style="left:1447px;top:868px;width:19px;height:19px;background:#fff;border:1px solid #c6c6c6;box-sizing:border-box"></div>
<svg class="a" style="left:911px;top:868px" width="556" height="19"><path d="M12.5 5 V14 L7.5 9.5Z" fill="#555"/><path d="M543.5 5 V14 L548.5 9.5Z" fill="#555"/></svg>
<div class="a" style="left:1px;top:892px;width:1491px;height:27px;background:#f3f3f3;border-top:1px solid #dadada;box-sizing:border-box"></div>
<div class="a" style="left:0;top:919px;width:1493px;height:1px;background:#8a8a8a"></div>
<div class="a" style="left:0;top:0;width:1px;height:920px;background:#8a8a8a"></div>
<div class="a" style="left:1492px;top:0;width:1px;height:920px;background:#8a8a8a"></div>
<svg class="a" style="left:10px;top:896px" width="20" height="20" viewBox="10 896 20 20"><rect x="13.5" y="902.5" width="13" height="10" fill="#fff"/><path d="M13.5 905 V912.5 H26.5 V902" fill="none" stroke="#666" stroke-width="1.1"/><rect x="20" y="899" width="7" height="3.7" fill="#666"/>
<path d="M19 904.5h2M22 904.5h2M16 907.5h2M19 907.5h2M22 907.5h2M16 910.5h2M19 910.5h2M22 910.5h2" stroke="#666"/><circle cx="15.4" cy="901.4" r="3.4" fill="#666"/></svg>
<div class="a" style="left:1106px;top:893px;width:49px;height:26px;background:#d4d4d4"></div>
<svg class="a" style="left:1100px;top:892px" width="393" height="28" viewBox="1100 892 393 28"><g fill="none" stroke="#666">
<rect x="1123.5" y="898.5" width="15" height="15"/><path d="M1128.5 898.5v15M1133.5 898.5v15M1123.5 903.5h15M1123.5 908.5h15"/>
<rect x="1173.5" y="898.5" width="15" height="15"/><rect x="1176.5" y="901.5" width="9" height="9"/><path d="M1178 904.5h6M1178 907.5h6"/>
<rect x="1222.5" y="898.5" width="15" height="15"/><path d="M1227.5 898.5v8h5v-8"/>
<path d="M1264 906.5h9M1410 906.5h10M1415 901.5v10"/>
</g><path d="M1279 906.5 H1403" stroke="#bdbdbd"/><rect x="1338.5" y="899.5" width="7" height="14" fill="#666"/></svg>
<div class="a" style="left:799px;top:292px;width:510px;height:371px;background:#f0f0f0;border:1px solid #6e6e6e;box-shadow:0 0 14px 2px rgba(0,0,0,0.22)"></div>
<div class="a" style="left:800px;top:293px;width:510px;height:37px;background:#fff"></div>
<svg class="a" style="left:1270px;top:302px" width="20" height="20"><path d="M3.5 3 L16.5 16 M16.5 3 L3.5 16" stroke="#222" stroke-width="1.3"/></svg>
<div class="a" style="left:809px;top:354px;width:12px;height:1px;background:#111"></div>
<div class="a" style="left:831px;top:359px;width:459px;height:20px;background:#fff;border:5px solid #ed1c24"></div>
<div class="a" style="left:874px;top:366px;width:1px;height:14px;background:#000"></div>
<div class="a" style="left:861px;top:413px;width:6px;height:1px;background:#111"></div>
<div class="a" style="left:900px;top:418px;width:26px;height:25px;background:#fff;border:1px solid #a8a8a8"></div>
<div class="a" style="left:884.5px;top:471px;width:3.5px;height:1px;background:#111"></div>
<div class="a" style="left:832px;top:476px;width:467px;height:27px;background:#fff;border:1px solid #a8a8a8"></div>
<div class="a" style="left:1279px;top:477px;width:20px;height:27px;background:#e1e1e1;border-left:1px solid #a8a8a8"></div>
<svg class="a" style="left:1281px;top:482px" width="16" height="14"><path d="M3 5 L8 10 L13 5" fill="none" stroke="#666" stroke-width="1.2"/></svg>
<div class="a" style="left:809px;top:530px;width:9px;height:1px;background:#111"></div>
<div class="a" style="left:832px;top:536px;width:467px;height:72px;background:#fff;border:1px solid #a8a8a8"></div>
<div class="a" style="left:1058px;top:622px;width:105px;height:23px;background:#e1e1e1;border:5px solid #ed1c24"></div>
<div class="a" style="left:1188px;top:625px;width:110px;height:27px;background:#e1e1e1;border:1px solid #adadad"></div>
<div class="t" style="left:688.0px;top:13.8px;font-family:'Liberation Sans';font-size:15.5px;color:#b3d1bd;letter-spacing:-0.49px;">Lam viec  -  Excel</div>
<div class="t" style="left:1146.0px;top:13.4px;font-family:'Liberation Sans';font-size:15.5px;color:#b3d1bd;letter-spacing:-0.79px;">Tu Thanh</div>
<div class="t" style="left:26.0px;top:54.8px;font-family:'Liberation Sans';font-size:15px;color:#ffffff;letter-spacing:-0.19px;">File</div>
<div class="t" style="left:88.7px;top:54.8px;font-family:'Liberation Sans';font-size:15px;color:#ffffff;letter-spacing:0.63px;">Home</div>
<div class="t" style="left:157.4px;top:54.8px;font-family:'Liberation Sans';font-size:15px;color:#ffffff;letter-spacing:-0.26px;">Insert</div>
<div class="t" style="left:220.0px;top:54.8px;font-family:'Liberation Sans';font-size:15px;color:#ffffff;letter-spacing:-0.36px;">Page Layout</div>
<div class="t" style="left:327.2px;top:54.8px;font-family:'Liberation Sans';font-size:15px;color:#ffffff;letter-spacing:-0.27px;">Formulas</div>
<div class="t" style="left:414.3px;top:54.8px;font-family:'Liberation Sans';font-size:15px;color:#ffffff;letter-spacing:0.14px;">Data</div>
<div class="t" style="left:473.0px;top:54.8px;font-family:'Liberation Sans';font-size:15px;color:#ffffff;letter-spacing:-0.44px;">Review</div>
<div class="t" style="left:546.8px;top:54.8px;font-family:'Liberation Sans';font-size:15px;color:#ffffff;letter-spacing:0.15px;">View</div>
<div class="t" style="left:702.0px;top:54.8px;font-family:'Liberation Sans';font-size:15px;color:#ffffff;letter-spacing:0.38px;">Help</div>
<div class="t" style="left:798.8px;top:55.0px;font-family:'Liberation Sans';font-size:15px;color:#ffffff;letter-spacing:0.14px;">Tell me what you want to do</div>
<div class="t" style="left:1426.8px;top:56.8px;font-family:'Liberation Sans';font-size:15px;color:#ffffff;letter-spacing:-0.58px;">Share</div>
<div class="t" style="left:606.5px;top:54.8px;font-family:'Liberation Sans';font-size:15px;color:#217346;letter-spacing:0.08px;">Developer</div>
<div class="t" style="left:17.0px;top:134.7px;font-family:'Liberation Sans';font-size:14px;color:#333333;letter-spacing:0.12px;">Visual</div>
<div class="t" style="left:19.5px;top:154.6px;font-family:'Liberation Sans';font-size:14px;color:#333333;letter-spacing:0.07px;">Basic</div>
<div class="t" style="left:65.4px;top:134.7px;font-family:'Liberation Sans';font-size:14px;color:#333333;letter-spacing:0.24px;">Macros</div>
<div class="t" style="left:144.7px;top:92.6px;font-family:'Liberation Sans';font-size:14px;color:#333333;letter-spacing:0.35px;">Record Macro</div>
<div class="t" style="left:144.7px;top:122.0px;font-family:'Liberation Sans';font-size:14px;color:#333333;letter-spacing:0.05px;">Use Relative References</div>
<div class="t" style="left:144.7px;top:151.0px;font-family:'Liberation Sans';font-size:14px;color:#333333;letter-spacing:0.30px;">Macro Security</div>
<div class="t" style="left:144.7px;top:179.6px;font-family:'Liberation Sans';font-size:13px;color:#262626;letter-spacing:-0.59px;">Code</div>
<div class="t" style="left:339.0px;top:134.7px;font-family:'Liberation Sans';font-size:14px;color:#333333;letter-spacing:0.31px;">Add-</div>
<div class="t" style="left:346.5px;top:154.6px;font-family:'Liberation Sans';font-size:14px;color:#333333;letter-spacing:0.30px;">ins</div>
<div class="t" style="left:393.5px;top:134.7px;font-family:'Liberation Sans';font-size:14px;color:#333333;letter-spacing:-0.43px;">Excel</div>
<div class="t" style="left:384.5px;top:154.6px;font-family:'Liberation Sans';font-size:14px;color:#333333;letter-spacing:0.76px;">Add-ins</div>
<div class="t" style="left:451.0px;top:134.7px;font-family:'Liberation Sans';font-size:14px;color:#333333;letter-spacing:-0.34px;">COM</div>
<div class="t" style="left:441.5px;top:154.6px;font-family:'Liberation Sans';font-size:14px;color:#333333;letter-spacing:0.67px;">Add-ins</div>
<div class="t" style="left:388.0px;top:179.6px;font-family:'Liberation Sans';font-size:13px;color:#262626;letter-spacing:0.32px;">Add-ins</div>
<div class="t" style="left:524.0px;top:134.7px;font-family:'Liberation Sans';font-size:14px;color:#333333;letter-spacing:0.10px;">Insert</div>
<div class="t" style="left:571.6px;top:134.7px;font-family:'Liberation Sans';font-size:14px;color:#a6a6a6;letter-spacing:0.26px;">Design</div>
<div class="t" style="left:574.7px;top:154.4px;font-family:'Liberation Sans';font-size:14px;color:#a6a6a6;letter-spacing:0.92px;">Mode</div>
<div class="t" style="left:648.0px;top:92.7px;font-family:'Liberation Sans';font-size:14px;color:#333333;letter-spacing:0.35px;">Properties</div>
<div class="t" style="left:648.0px;top:122.0px;font-family:'Liberation Sans';font-size:14px;color:#333333;letter-spacing:0.39px;">View Code</div>
<div class="t" style="left:648.0px;top:151.0px;font-family:'Liberation Sans';font-size:14px;color:#333333;letter-spacing:0.45px;">Run Dialog</div>
<div class="t" style="left:598.4px;top:179.6px;font-family:'Liberation Sans';font-size:13px;color:#262626;">Controls</div>
<div class="t" style="left:754.0px;top:134.7px;font-family:'Liberation Sans';font-size:14px;color:#333333;letter-spacing:0.13px;">Source</div>
<div class="t" style="left:831.3px;top:92.7px;font-family:'Liberation Sans';font-size:14px;color:#a6a6a6;letter-spacing:0.44px;">Map Properties</div>
<div class="t" style="left:831.3px;top:122.0px;font-family:'Liberation Sans';font-size:14px;color:#333333;letter-spacing:-0.12px;">Expansion Packs</div>
<div class="t" style="left:831.3px;top:151.0px;font-family:'Liberation Sans';font-size:14px;color:#a6a6a6;letter-spacing:0.14px;">Refresh Data</div>
<div class="t" style="left:974.5px;top:93.2px;font-family:'Liberation Sans';font-size:14px;color:#333333;letter-spacing:0.90px;">Import</div>
<div class="t" style="left:974.5px;top:122.0px;font-family:'Liberation Sans';font-size:14px;color:#a6a6a6;letter-spacing:0.31px;">Export</div>
<div class="t" style="left:874.0px;top:179.6px;font-family:'Liberation Sans';font-size:13px;color:#262626;letter-spacing:0.13px;">XML</div>
<div class="t" style="left:15.0px;top:217.0px;font-family:'Liberation Sans';font-size:15px;color:#222;letter-spacing:-1.69px;">D9</div>
<div class="t" style="left:325.0px;top:217.0px;font-family:'Liberation Sans';font-size:15px;color:#222;letter-spacing:0.43px;">6,75</div>
<div class="t" style="left:117.6px;top:866.5px;font-family:'Liberation Sans';font-size:16px;color:#262626;letter-spacing:-0.06px;">Sheet1</div>
<div class="t" style="left:195.2px;top:866.5px;font-family:'Liberation Sans';font-size:16px;font-weight:700;color:#217346;letter-spacing:0.50px;">Điểm TB học kỳ 2</div>
<div class="t" style="left:363.4px;top:866.5px;font-family:'Liberation Sans';font-size:16px;color:#262626;letter-spacing:0.43px;">Cách vẽ hình trong Excel</div>
<div class="t" style="left:1436.3px;top:900.0px;font-family:'Liberation Sans';font-size:13px;color:#262626;letter-spacing:-0.52px;">100%</div>
<div class="t" style="left:809.4px;top:304.0px;font-family:'Liberation Sans';font-size:15px;color:#111;letter-spacing:-0.19px;">Record Macro</div>
<div class="t" style="left:1219.0px;top:303.5px;font-family:'Liberation Sans';font-size:15px;color:#111;">?</div>
<div class="t" style="left:809.4px;top:342.9px;font-family:'Liberation Sans';font-size:12.5px;color:#111;letter-spacing:0.36px;">Macro name:</div>
<div class="t" style="left:838.5px;top:366.8px;font-family:'Liberation Sans';font-size:12.5px;color:#111;letter-spacing:-0.09px;">hsGioi</div>
<div class="t" style="left:809.4px;top:401.4px;font-family:'Liberation Sans';font-size:12.5px;color:#111;letter-spacing:0.05px;">Shortcut key:</div>
<div class="t" style="left:867.4px;top:425.8px;font-family:'Liberation Sans';font-size:12.5px;color:#111;letter-spacing:0.21px;">Ctrl+</div>
<div class="t" style="left:809.4px;top:459.8px;font-family:'Liberation Sans';font-size:12.5px;color:#111;letter-spacing:0.27px;">Store macro in:</div>
<div class="t" style="left:837.8px;top:484.8px;font-family:'Liberation Sans';font-size:12.5px;color:#111;letter-spacing:0.46px;">This Workbook</div>
<div class="t" style="left:809.4px;top:518.8px;font-family:'Liberation Sans';font-size:12.5px;color:#111;letter-spacing:0.24px;">Description:</div>
<div class="t" style="left:1108.5px;top:635.0px;font-family:'Liberation Sans';font-size:12.5px;color:#111;letter-spacing:-1.06px;">OK</div>
<div class="t" style="left:1225.7px;top:635.0px;font-family:'Liberation Sans';font-size:12.5px;color:#111;letter-spacing:-0.32px;">Cancel</div>
</body></html>
